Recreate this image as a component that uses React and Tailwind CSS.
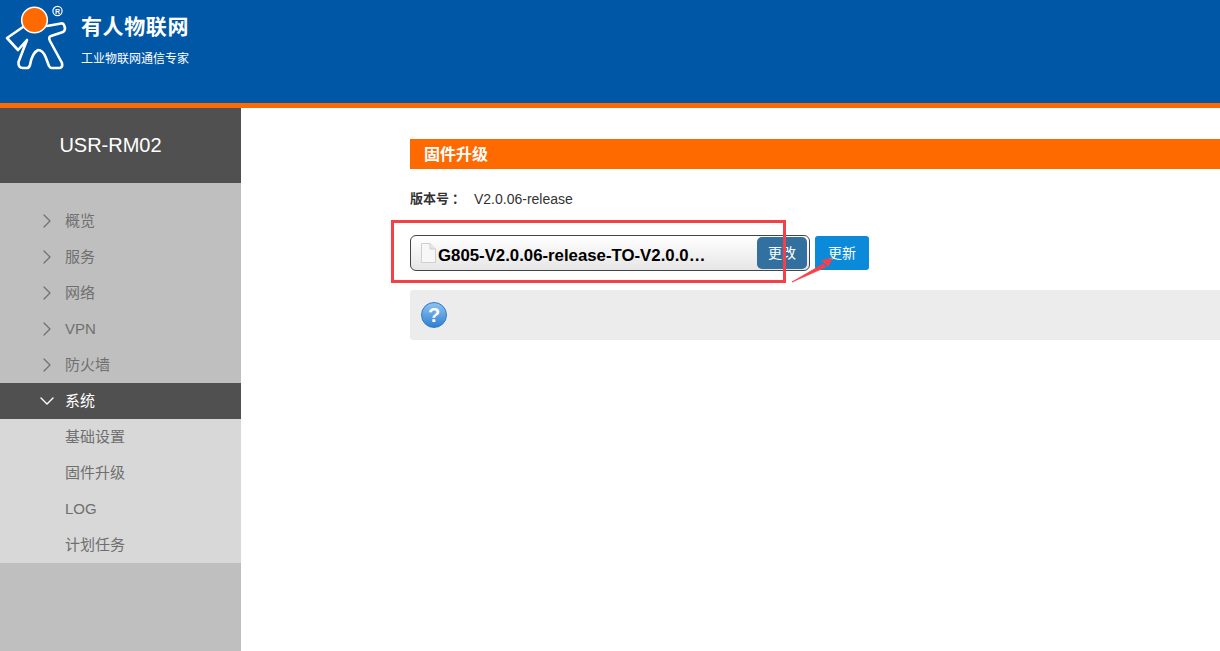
import React from "react";
import { ChevronRight, ChevronDown } from "lucide-react";

const cjk = "font-['Liberation_Sans','Noto_Sans_CJK_SC',sans-serif]";

const menu = ["概览", "服务", "网络", "VPN", "防火墙"];
const subMenu = ["基础设置", "固件升级", "LOG", "计划任务"];

const Logo = () => (
  <svg width="69" height="75" viewBox="0 0 69 75" className="shrink-0">
    <path
      d="M23 27 L7 38 L18 50 L27 40 L18.5 62 Q18 68 23 68 L27 68 Q29 68 30 65 Q32 53 38 50 Q43 50 46 58 L49 66 Q50 68 52 68 L60 68 Q63 67 62 63 L50 41 Q48 37 51 36 L63 32 Q65 31 65 28 L64 25 Q63.5 23 61 23.5 L47 26"
      fill="none"
      stroke="#fff"
      strokeWidth="2.6"
      strokeLinejoin="round"
      strokeLinecap="round"
    />
    <circle cx="34.5" cy="20" r="12.8" fill="#ff6a00" stroke="#fff" strokeWidth="1.6" />
    <circle cx="57.5" cy="11" r="4.6" fill="none" stroke="#fff" strokeWidth="1.2" />
    <text x="57.5" y="13.6" fontSize="7" fontWeight="bold" fill="#fff" textAnchor="middle" fontFamily="Liberation Sans">R</text>
  </svg>
);

const FileIcon = () => (
  <svg width="18" height="22" viewBox="0 0 18 22" className="shrink-0">
    <path d="M2.5 1.5 H11 L16.5 7 V20.5 H2.5 Z" fill="#f7f7f7" stroke="#cfcfcf" />
    <path d="M11 1.5 V7 H16.5" fill="#e6e6e6" stroke="#cfcfcf" />
  </svg>
);

const HelpIcon = () => (
  <div className="flex h-[26px] w-[26px] items-center justify-center rounded-full border border-[#2c78c4] bg-gradient-to-b from-[#8cc4f2] to-[#2e7fd0] text-[20px] font-bold leading-none text-white">
    ?
  </div>
);

const Sidebar = () => (
  <aside className="flex w-[241px] shrink-0 flex-col bg-[#bfbfbf]">
    <div className="flex h-[75px] items-center justify-center bg-[#505050] pb-[2px] pr-[20px] text-[20px] text-white">
      USR-RM02
    </div>
    <ul className="pt-5 text-[15px] text-[#6f6f6f]">
      {menu.map((item) => (
        <li key={item} className="flex h-9 items-center pl-[35px]">
          <ChevronRight size={24} strokeWidth={1.2} className="mr-[6px]" />
          <span>{item}</span>
        </li>
      ))}
      <li className="flex h-9 items-center bg-[#505050] pl-[35px] text-white">
        <ChevronDown size={24} strokeWidth={1.4} className="mr-[6px]" />
        <span>系统</span>
      </li>
      <li className="bg-[#d8d8d8]">
        <ul>
          {subMenu.map((item) => (
            <li key={item} className="flex h-9 items-center pl-[65px]">
              {item}
            </li>
          ))}
        </ul>
      </li>
    </ul>
  </aside>
);

export default function App() {
  return (
    <div className={`relative flex h-[651px] w-[1220px] flex-col overflow-hidden bg-white ${cjk}`}>
      <header className="flex h-[108px] shrink-0 border-b-[5px] border-[#ff6a00] bg-[#0057a6] text-white">
        <Logo />
        <div className="ml-[12px] pt-[12px]">
          <div className="text-[21px] font-bold leading-[30px] tracking-[0.6px]">有人物联网</div>
          <div className="mt-[9px] text-[12px] leading-[16px]">工业物联网通信专家</div>
        </div>
      </header>

      <div className="flex flex-1">
        <Sidebar />
        <main className="flex-1 pl-[169px] pt-[31px]">
          <h2 className="flex h-[30px] items-center bg-[#ff6a00] pl-[14px] pt-[1px] text-[16px] font-bold text-white">
            固件升级
          </h2>
          <div className="mt-[21px] flex h-[18px] items-center text-[14px] text-[#333]">
            <span className="w-[64px] text-[13px] font-bold">
              版本号<span className="ml-[3px]">：</span>
            </span>
            <span>V2.0.06-release</span>
          </div>
          <div className="mt-[27px] flex items-center">
            <div className="flex h-9 w-[400px] items-center rounded-[6px] border border-[#444] bg-gradient-to-b from-white to-[#e6e6e6] pl-[8px] pr-[2px]">
              <FileIcon />
              <span className="ml-[1px] whitespace-nowrap pt-[6px] text-[16.8px] font-bold leading-none text-black">
                G805-V2.0.06-release-TO-V2.0.0…
              </span>
              <button className="ml-auto h-8 w-[50px] rounded-[5px] bg-[#31709f] text-[14px] text-white">更改</button>
            </div>
            <button className="ml-[5px] h-[34px] w-[54px] rounded-[3px] bg-[#0a8ad8] text-[14px] text-white">更新</button>
          </div>
          <div className="mt-[19px] flex h-[50px] items-center rounded-l-[3px] bg-[#ececec] pl-[11px]">
            <HelpIcon />
          </div>
        </main>
      </div>

      {/* red annotation drawn over the screenshot */}
      <div className="absolute left-[391px] top-[220px] h-[63px] w-[395px] border-[3px] border-[#f74046]" />
      <svg width="60" height="40" viewBox="0 0 60 40" className="absolute left-[785px] top-[250px]">
        <path d="M7 32 L38 14 L41 17 Z" fill="#f74046" stroke="#f74046" strokeWidth="0.8" />
        <path d="M48 8 L36 10 L43 17 Z" fill="#f74046" />
      </svg>
    </div>
  );
}
